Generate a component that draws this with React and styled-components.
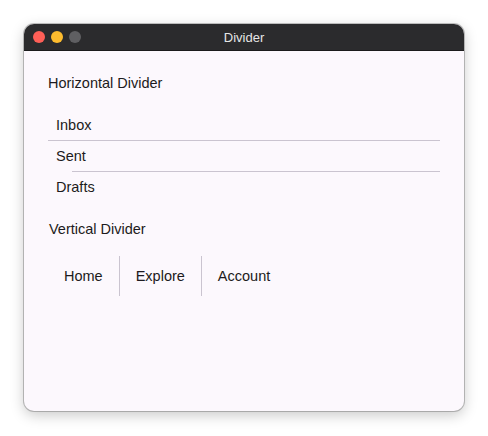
import React from "react";
import styled, { createGlobalStyle } from "styled-components";

const GlobalStyle = createGlobalStyle`
    html, body {
        margin: 0;
        padding: 0;
        background-color: #ffffff;
    }
    body {
        font-family: "Liberation Sans", Arial, sans-serif;
    }
`;

const Page = styled.div`
    width: 488px;
    height: 436px;
    padding: 24px;
    box-sizing: border-box;
`;

const Window = styled.div`
    width: 440px;
    height: 387px;
    display: flex;
    flex-direction: column;
    border-radius: 10px;
    overflow: hidden;
    background-color: #fcf8fd;
    box-shadow: 0 0 0 1px rgba(0, 0, 0, 0.22), 0 4px 14px rgba(0, 0, 0, 0.22);
`;

const TitleBar = styled.div`
    height: 26px;
    flex-shrink: 0;
    display: flex;
    align-items: center;
    position: relative;
    background-color: #2b2b2d;
    border-bottom: 1px solid #1b1b1c;
`;

const Lights = styled.div`
    display: flex;
    gap: 6px;
    padding-left: 9px;
`;

const Light = styled.span`
    width: 12px;
    height: 12px;
    border-radius: 50%;
    background-color: ${(p) => p.color};
`;

const Title = styled.div`
    position: absolute;
    left: 0;
    right: 0;
    text-align: center;
    color: #e6e6e6;
    font-size: 13px;
`;

const Content = styled.div`
    padding: 24px 24px 0 24px;
    display: flex;
    flex-direction: column;
    color: #1d1b20;
`;

const Heading = styled.div`
    font-size: 14.5px;
    line-height: 16px;
    margin-bottom: 19px;
    padding-left: ${(p) => p.inset || 0}px;
`;

const List = styled.div`
    display: flex;
    flex-direction: column;
    margin-bottom: 19px;
`;

const ListItem = styled.div`
    height: 30px;
    display: flex;
    align-items: center;
    padding-left: 8px;
    font-size: 14.5px;
`;

const HLine = styled.div`
    height: 1px;
    margin-left: ${(p) => p.inset || 0}px;
    background-color: #cac4d0;
`;

const Row = styled.div`
    display: flex;
    align-items: center;
    height: 40px;
`;

const Tab = styled.div`
    padding: 0 16px;
    font-size: 14.5px;
    line-height: 16px;
`;

const VLine = styled.div`
    width: 1px;
    align-self: stretch;
    background-color: #cac4d0;
`;

const App = () => {
    return (
        <Page>
            <GlobalStyle />
            <Window>
                <TitleBar>
                    <Lights>
                        <Light color="#fe5f57" />
                        <Light color="#febc2e" />
                        <Light color="#5f5f62" />
                    </Lights>
                    <Title>Divider</Title>
                </TitleBar>

                <Content>
                    <Heading>Horizontal Divider</Heading>
                    <List>
                        <ListItem>Inbox</ListItem>
                        <HLine />
                        <ListItem>Sent</ListItem>
                        <HLine inset={24} />
                        <ListItem>Drafts</ListItem>
                    </List>

                    <Heading inset={1}>Vertical Divider</Heading>
                    <Row>
                        <Tab>Home</Tab>
                        <VLine />
                        <Tab>Explore</Tab>
                        <VLine />
                        <Tab>Account</Tab>
                    </Row>
                </Content>
            </Window>
        </Page>
    );
};

export default App;
